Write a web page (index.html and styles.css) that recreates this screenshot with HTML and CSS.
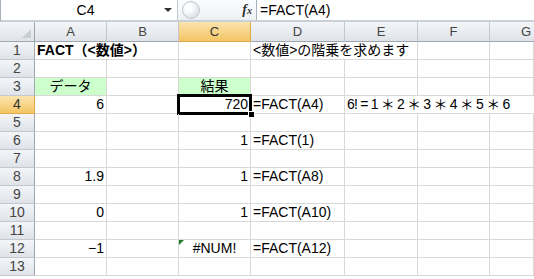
FILE: index.html
```html
<!DOCTYPE html>
<html lang="ja">
<head>
  <meta charset="UTF-8">
  <title>FACT関数</title>
  <link rel="stylesheet" href="styles.css">
</head>
<body>

  <!-- formula bar -->
  <div class="formula-bar">
    <div class="name-box">
      <span class="name">C4</span>
      <span class="drop"></span>
    </div>
    <div class="bar-tools">
      <span class="knob"></span>
      <span class="fx">f<small>x</small></span>
    </div>
    <div class="formula">=FACT(A4)</div>
  </div>

  <!-- sheet grid -->
  <div class="sheet">
    <div class="row head-row">
      <div class="corner"></div>
      <div class="col-head">A</div>
      <div class="col-head">B</div>
      <div class="col-head active">C</div>
      <div class="col-head">D</div>
      <div class="col-head">E</div>
      <div class="col-head">F</div>
      <div class="col-head last">G</div>
    </div>

    <div class="row">
      <div class="row-head">1</div>
      <div class="cell bold span2">FACT（&lt;数値&gt;）</div>
      <div class="cell"></div>
      <div class="cell span2">&lt;数値&gt;の階乗を求めます</div>
      <div class="cell"></div>
      <div class="cell"></div>
    </div>

    <div class="row">
      <div class="row-head">2</div>
      <div class="cell"></div>
      <div class="cell"></div>
      <div class="cell"></div>
      <div class="cell"></div>
      <div class="cell"></div>
      <div class="cell"></div>
      <div class="cell"></div>
    </div>

    <div class="row">
      <div class="row-head">3</div>
      <div class="cell green center">データ</div>
      <div class="cell"></div>
      <div class="cell green center">結果</div>
      <div class="cell"></div>
      <div class="cell"></div>
      <div class="cell"></div>
      <div class="cell"></div>
    </div>

    <div class="row">
      <div class="row-head active">4</div>
      <div class="cell num">6</div>
      <div class="cell"></div>
      <div class="cell num selected">720</div>
      <div class="cell">=FACT(A4)</div>
      <div class="cell span3 product">6! = 1 ＊ 2 ＊ 3 ＊ 4 ＊ 5 ＊ 6</div>
    </div>

    <div class="row">
      <div class="row-head">5</div>
      <div class="cell"></div>
      <div class="cell"></div>
      <div class="cell"></div>
      <div class="cell"></div>
      <div class="cell"></div>
      <div class="cell"></div>
      <div class="cell"></div>
    </div>

    <div class="row">
      <div class="row-head">6</div>
      <div class="cell"></div>
      <div class="cell"></div>
      <div class="cell num">1</div>
      <div class="cell">=FACT(1)</div>
      <div class="cell"></div>
      <div class="cell"></div>
      <div class="cell"></div>
    </div>

    <div class="row">
      <div class="row-head">7</div>
      <div class="cell"></div>
      <div class="cell"></div>
      <div class="cell"></div>
      <div class="cell"></div>
      <div class="cell"></div>
      <div class="cell"></div>
      <div class="cell"></div>
    </div>

    <div class="row">
      <div class="row-head">8</div>
      <div class="cell num">1.9</div>
      <div class="cell"></div>
      <div class="cell num">1</div>
      <div class="cell">=FACT(A8)</div>
      <div class="cell"></div>
      <div class="cell"></div>
      <div class="cell"></div>
    </div>

    <div class="row">
      <div class="row-head">9</div>
      <div class="cell"></div>
      <div class="cell"></div>
      <div class="cell"></div>
      <div class="cell"></div>
      <div class="cell"></div>
      <div class="cell"></div>
      <div class="cell"></div>
    </div>

    <div class="row">
      <div class="row-head">10</div>
      <div class="cell num">0</div>
      <div class="cell"></div>
      <div class="cell num">1</div>
      <div class="cell">=FACT(A10)</div>
      <div class="cell"></div>
      <div class="cell"></div>
      <div class="cell"></div>
    </div>

    <div class="row">
      <div class="row-head">11</div>
      <div class="cell"></div>
      <div class="cell"></div>
      <div class="cell"></div>
      <div class="cell"></div>
      <div class="cell"></div>
      <div class="cell"></div>
      <div class="cell"></div>
    </div>

    <div class="row">
      <div class="row-head">12</div>
      <div class="cell num">−1</div>
      <div class="cell"></div>
      <div class="cell center error">#NUM!</div>
      <div class="cell">=FACT(A12)</div>
      <div class="cell"></div>
      <div class="cell"></div>
      <div class="cell"></div>
    </div>

    <div class="row">
      <div class="row-head">13</div>
      <div class="cell"></div>
      <div class="cell"></div>
      <div class="cell"></div>
      <div class="cell"></div>
      <div class="cell"></div>
      <div class="cell"></div>
      <div class="cell"></div>
    </div>
  </div>

</body>
</html>
```

FILE: styles.css
```css
body {
  margin: 0;
  width: 534px;
  overflow: hidden;
  background-color: #ffffff;
  font-family: "Liberation Sans", "Noto Sans CJK JP", sans-serif;
  font-size: 14px;
  color: #000000;
}

/* formula bar */
.formula-bar {
  display: flex;
  height: 20px;
  border-left: 1px solid #a7b0ba;
  border-bottom: 2px solid #c9d0d8;
  background-color: #ffffff;
}
.name-box {
  width: 177px;
  display: flex;
  align-items: center;
  border-right: 1px solid #c4cad2;
  box-sizing: border-box;
}
.name {
  flex: 1;
  text-align: center;
  padding-left: 6px;
  line-height: 20px;
}
.drop {
  width: 0;
  height: 0;
  margin-right: 5px;
  border-left: 4px solid transparent;
  border-right: 4px solid transparent;
  border-top: 4px solid #333333;
}
.bar-tools {
  width: 79px;
  display: flex;
  align-items: center;
  justify-content: space-between;
  padding: 0 4px 0 4px;
  box-sizing: border-box;
  border-right: 1px solid #a9b1bb;
  background: linear-gradient(#fbfcfd, #eef1f4);
}
.knob {
  width: 16px;
  height: 16px;
  border-radius: 50%;
  border: 1px solid #c2c8cf;
  background: radial-gradient(circle at 35% 35%, #ffffff 20%, #d9dee4 80%);
}
.fx {
  font-family: "Liberation Serif", serif;
  font-style: italic;
  font-weight: bold;
  font-size: 14px;
  color: #333333;
}
.fx small {
  font-size: 10px;
}
.formula {
  flex: 1;
  padding-left: 3px;
  line-height: 20px;
}

/* sheet */
.sheet {
  overflow: hidden;
}
.row {
  display: grid;
  grid-template-columns: 35px 72px 72px 72px 94px 73px 72px 1fr;
  height: 18px;
}
.head-row {
  height: 20px;
}
.corner,
.col-head,
.row-head {
  box-sizing: border-box;
  background: linear-gradient(#f3f5f8, #dfe3e9);
  color: #444444;
  font-family: "Liberation Sans", sans-serif;
  font-size: 13px;
  text-align: center;
  border-right: 1px solid #c3c8cf;
  border-bottom: 1px solid #c3c8cf;
}
.corner {
  position: relative;
  border-right-color: #9ea6b0;
  border-bottom-color: #9ea6b0;
}
.corner::after {
  content: "";
  position: absolute;
  right: 3px;
  bottom: 3px;
  border-left: 9px solid transparent;
  border-bottom: 9px solid #c9ced5;
}
.col-head {
  line-height: 19px;
  border-bottom-color: #9ea6b0;
}
.col-head.last {
  text-align: left;
  padding-left: 31px;
  border-right: none;
}
.row-head {
  line-height: 17px;
  font-size: 14px;
  border-right-color: #9ea6b0;
}
.col-head.active,
.row-head.active {
  background: linear-gradient(#fbe4ae, #f3c564);
  color: #333333;
  border-color: #e2a84b;
}

.cell {
  position: relative;
  box-sizing: border-box;
  border-right: 1px solid #d8d8d8;
  border-bottom: 1px solid #d8d8d8;
  padding: 0 2px;
  line-height: 17px;
  white-space: nowrap;
}
.span2 {
  grid-column: span 2;
}
.span3 {
  grid-column: span 3;
}
.bold {
  font-weight: bold;
}
.center {
  text-align: center;
}
.num {
  text-align: right;
  padding-right: 2px;
}
.green {
  background-color: #ccffcc;
}
.product {
  letter-spacing: -0.8px;
  border-right: none;
}

/* active cell */
.selected::after {
  content: "";
  position: absolute;
  top: -2px;
  left: -2px;
  right: -2px;
  bottom: -2px;
  border: 3px solid #000000;
}
.selected::before {
  content: "";
  position: absolute;
  right: -5px;
  bottom: -5px;
  width: 5px;
  height: 5px;
  background-color: #000000;
  border: 1px solid #ffffff;
  z-index: 1;
}

/* error indicator */
.error::before {
  content: "";
  position: absolute;
  top: 0;
  left: 0;
  border-top: 5px solid #217a2b;
  border-right: 5px solid transparent;
}
```
